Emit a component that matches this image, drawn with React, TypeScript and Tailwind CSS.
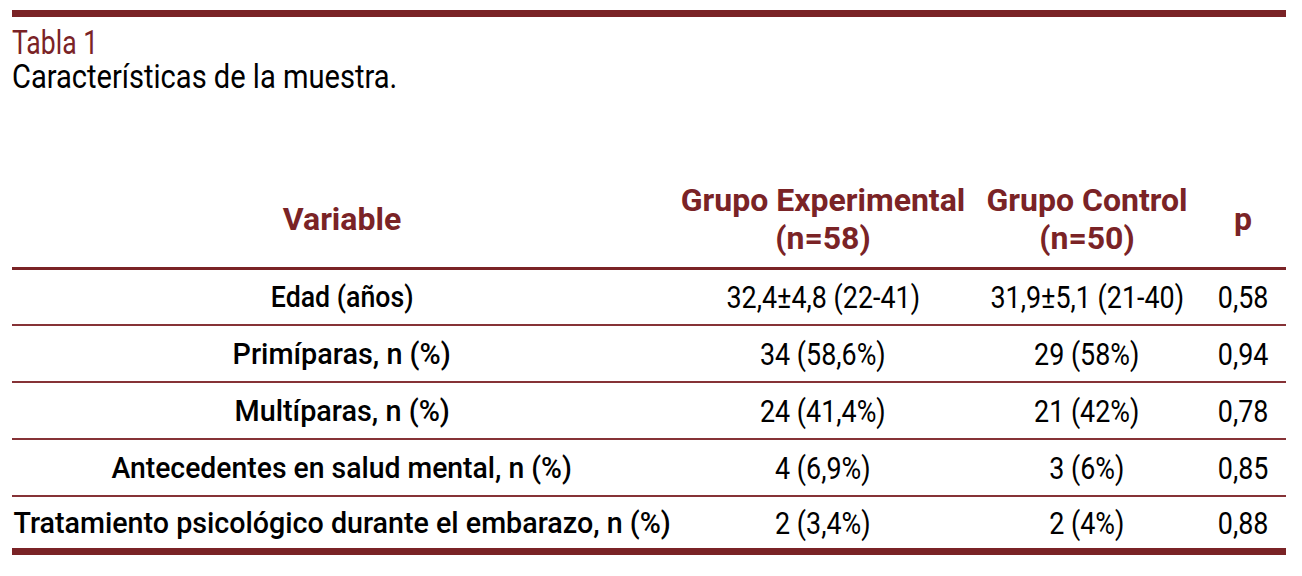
const rows = [
  { label: "Edad (años)", fit: "scale-x-[0.89]", exp: "32,4±4,8 (22-41)", ctrl: "31,9±5,1 (21-40)", p: "0,58", h: "h-[54px]" },
  { label: "Primíparas, n (%)", fit: "scale-x-[0.96]", exp: "34 (58,6%)", ctrl: "29 (58%)", p: "0,94", h: "h-[55px]" },
  { label: "Multíparas, n (%)", fit: "scale-x-[0.96]", exp: "24 (41,4%)", ctrl: "21 (42%)", p: "0,78", h: "h-[55px]" },
  { label: "Antecedentes en salud mental, n (%)", fit: "scale-x-[0.945]", exp: "4 (6,9%)", ctrl: "3 (6%)", p: "0,85", h: "h-[55px]" },
  { label: "Tratamiento psicológico durante el embarazo, n (%)", fit: "scale-x-[0.955]", exp: "2 (3,4%)", ctrl: "2 (4%)", p: "0,88", h: "h-[51px]" },
];

const cols = "grid grid-cols-[660px_302px_226px_86px]";
const narrow = "inline-block whitespace-nowrap";

function Cell({ children }: { children: React.ReactNode }) {
  return <div className="flex justify-center">{children}</div>;
}

export default function App() {
  return (
    <div
      className="min-h-[576px] w-[1302px] bg-white px-3 pt-[10px] text-black"
      style={{ fontFamily: 'Roboto, "Liberation Sans", sans-serif' }}
    >
      <div className="h-[7px] w-[1274px] bg-[#7a2326]" />

      <div className="mt-[8px] text-[34px] leading-[34px]">
        <p>
          <span className={`${narrow} origin-left scale-x-[0.78] text-[#7a2326]`}>Tabla 1</span>
        </p>
        <p>
          <span className={`${narrow} origin-left scale-x-[0.855]`}>Características de la muestra.</span>
        </p>
      </div>

      <div className="mt-[88px] w-[1274px]">
        <div className={`${cols} items-center pb-[10px] text-center text-[32px] leading-[38px] font-bold text-[#7a2326]`}>
          <Cell>Variable</Cell>
          <Cell>
            <span className={narrow}>
              Grupo Experimental
              <br />
              (n=58)
            </span>
          </Cell>
          <Cell>
            <span className={narrow}>
              Grupo Control
              <br />
              (n=50)
            </span>
          </Cell>
          <Cell>p</Cell>
        </div>
        <div className="h-[3px] bg-[#7a2326]" />

        {rows.map((r, i) => (
          <div key={r.label}>
            <div className={`${cols} ${r.h} items-center leading-none`}>
              <Cell>
                <span className={`${narrow} ${r.fit} text-[30px] font-medium`}>{r.label}</span>
              </Cell>
              <Cell>
                <span className={`${narrow} scale-x-[0.84] text-[32px]`}>{r.exp}</span>
              </Cell>
              <Cell>
                <span className={`${narrow} scale-x-[0.84] text-[32px]`}>{r.ctrl}</span>
              </Cell>
              <Cell>
                <span className={`${narrow} scale-x-[0.84] text-[32px]`}>{r.p}</span>
              </Cell>
            </div>
            {i < rows.length - 1 ? (
              <div className="h-[2px] bg-[#863236]" />
            ) : (
              <div className="h-[7px] bg-[#7a2326]" />
            )}
          </div>
        ))}
      </div>
    </div>
  );
}
